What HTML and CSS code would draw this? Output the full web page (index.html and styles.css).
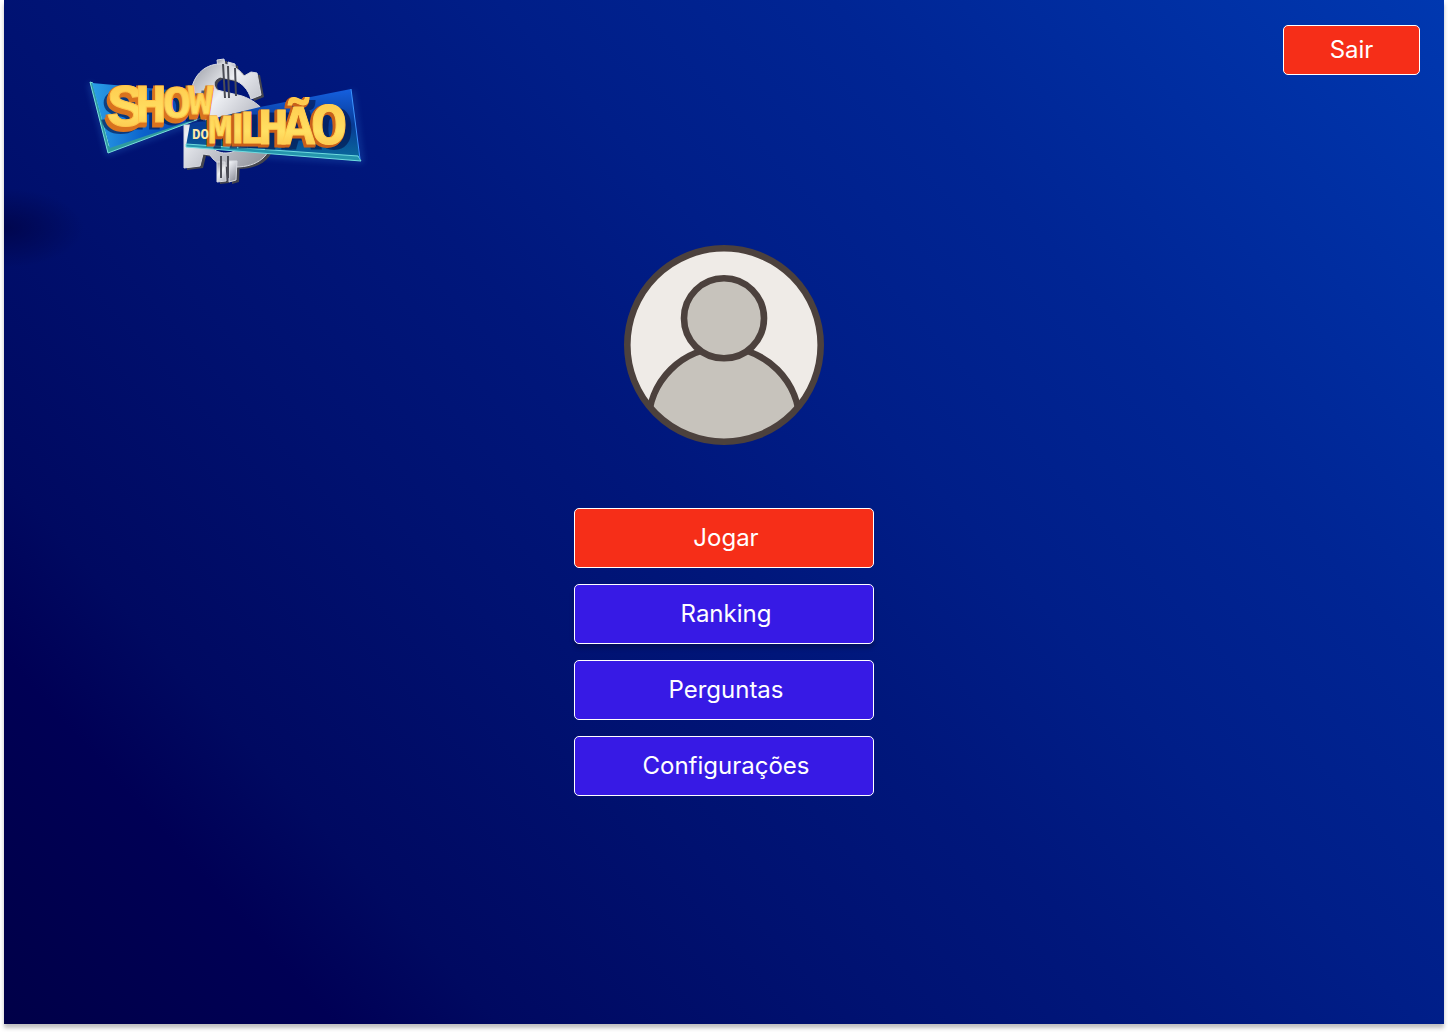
FILE: index.html
```html
<!DOCTYPE html>
<html lang="pt-BR">
<head>
<meta charset="utf-8">
<meta name="viewport" content="width=device-width, initial-scale=1">
<title>Show do Milhão</title>
<link rel="stylesheet" href="styles.css">
</head>
<body>
<div class="screen">
  <header class="header">
    <svg class="logo" viewBox="0 0 290 140" role="img" aria-label="Show do Milhão">
      <defs>
        <linearGradient id="silver" x1="0" y1="0" x2="1" y2="1">
          <stop offset="0" stop-color="#8d8f98"/><stop offset=".35" stop-color="#eef0f4"/>
          <stop offset=".6" stop-color="#c3c5cd"/><stop offset="1" stop-color="#85878f"/>
        </linearGradient>
        <linearGradient id="panelLeft" x1="0" y1="0" x2="1" y2="0">
          <stop offset="0" stop-color="#2b9fe6"/><stop offset=".45" stop-color="#0b62cc"/><stop offset="1" stop-color="#063a9e"/>
        </linearGradient>
        <linearGradient id="panelRight" x1="0" y1="0" x2="0" y2="1">
          <stop offset="0" stop-color="#1560e0"/><stop offset=".5" stop-color="#073a94"/><stop offset="1" stop-color="#0a6d9c"/>
        </linearGradient>
        <linearGradient id="gold" x1="0" y1="0" x2="0" y2="1">
          <stop offset="0" stop-color="#ffc447"/><stop offset=".55" stop-color="#ffe063"/><stop offset="1" stop-color="#fbb13c"/>
        </linearGradient>
        <filter id="glow" x="-20%" y="-20%" width="140%" height="140%"><feGaussianBlur stdDeviation="3"/></filter>
        <g id="dollar">
          <path d="M137 10l7-1 3 17h-8zM148 12l7 2 1 15-7-2z"/>
          <path d="M171 22l6 1 4 22-10 4c-3-10-9-16-17-19l-14-3c-6 3-8 7-3 13l25 6c20 7 30 22 30 40 0 20-15 31-36 31-13 0-21-4-26-12l-7-1-3 12-16 2V75h15c4 18 14 28 27 28 9 0 13-5 12-10-2-6-9-9-20-14-17-9-27-17-27-33 0-19 13-32 29-32 9 0 18 3 24 12z"/>
          <path d="M137 112h8l1 19-9 1zM149 111h8l-1 19-7 2z"/>
        </g>
        <g id="show">
          <text class="logo-word"><tspan x="27" y="76" font-size="62">S</tspan><tspan x="55" y="72" font-size="53">H</tspan><tspan x="83" y="68" font-size="47">O</tspan><tspan x="108" y="64" font-size="42">W</tspan></text>
        </g>
        <g id="milhao">
          <text class="logo-word"><tspan x="128" y="93" font-size="41">M</tspan><tspan class="logo-stem" x="152" y="93" font-size="42">I</tspan><tspan x="159" y="93" font-size="47">L</tspan><tspan x="178" y="94" font-size="51">H</tspan><tspan x="202" y="94" font-size="55">Ã</tspan><tspan x="231" y="94" font-size="60">O</tspan></text>
        </g>
      </defs>
      <path d="M10 33L28 103 125 68M180 105l101 6-9-70" fill="none" stroke="#4aa8ff" stroke-width="3" opacity=".35" filter="url(#glow)"/>
      <use href="#dollar" x="3" y="2" fill="#45464f"/>
      <use href="#dollar" fill="url(#silver)" stroke="#d9dbe1" stroke-width="1"/>
      <path d="M143 14l2 34M148 16l1 32M155 18l1 28M141 106v22M148 106v22" stroke="#4a4c55" stroke-width="2"/>
      <path d="M10 32l3 1 16 63 98-33v3L28 103z" fill="#2e9b9f" stroke="#7ae0dc" stroke-width="1"/>
      <path d="M12 33L112 42 128 48 122 67 30 98z" fill="url(#panelLeft)"/>
      <path d="M110 74L180 57 271 39l9 72-174-15z" fill="url(#panelRight)"/>
      <path d="M106 94l172 12 3 5-175-14z" fill="#2595ac" stroke="#70dce0" stroke-width="1"/>
      <path d="M271 39l9 70" stroke="#3c95ff" stroke-width="1"/>
      <g class="logo-depth" opacity=".65" fill="#03164e" stroke="#03164e"><use href="#show" x="-5" y="6"/><use href="#milhao" x="5" y="4"/></g>
      <g class="logo-depth" fill="#d9731f" stroke="#d9731f">
        <use href="#show" x="-2" y="4"/><use href="#show" x="-1" y="3"/><use href="#show" x="-1" y="1"/>
      </g>
      <use class="logo-face" href="#show" fill="url(#gold)" stroke="#ffc64c"/>
      <g class="logo-depth" fill="#c9601a" stroke="#c9601a">
        <use href="#milhao" x="-2" y="2"/><use href="#milhao" x="-1" y="1"/>
      </g>
      <use class="logo-face" href="#milhao" fill="url(#gold)" stroke="#ffd053"/>
      <text class="logo-small" x="112" y="89">DO</text>
    </svg>
    <button class="button button-red button-exit" type="button">Sair</button>
  </header>
  <main class="menu">
    <svg class="avatar" viewBox="0 0 200 200" role="img" aria-label="Avatar do jogador">
      <defs><clipPath id="face"><circle cx="100" cy="100" r="97"/></clipPath></defs>
      <circle cx="100" cy="100" r="97" fill="#efebe7"/>
      <g stroke="#4c413d" stroke-width="6.6">
        <circle cx="100" cy="178" r="75.5" fill="#c7c3bc" clip-path="url(#face)"/>
        <circle cx="100" cy="73.3" r="40" fill="#c7c3bc"/>
        <circle cx="100" cy="100" r="96.7" fill="none"/>
      </g>
    </svg>
    <nav class="actions" aria-label="Menu principal">
      <button class="button button-red" type="button">Jogar</button>
      <button class="button button-raised" type="button">Ranking</button>
      <button class="button" type="button">Perguntas</button>
      <button class="button" type="button">Configurações</button>
    </nav>
  </main>
</div>
</body>
</html>
```
FILE: styles.css
```css
* {
  box-sizing: border-box;
}

body {
  margin: 0;
  background: #fff;
  font-family: Inter, "Liberation Sans", sans-serif;
}

.screen {
  display: flex;
  flex-direction: column;
  min-height: calc(100vh - 8px);
  margin: 0 4px 8px;
  background:
    radial-gradient(ellipse 80px 40px at 0 228px, rgba(0, 0, 60, 0.6), transparent),
    linear-gradient(48deg, #000048 0%, #000055 14%, #000961 21%, #001170 36%, #00177c 49%, #001e88 60%, #002594 74%, #002da0 85%, #0038b0 100%);
  box-shadow: 0 4px 4px rgba(0, 0, 0, 0.25);
}

.header {
  display: flex;
  align-items: flex-start;
  justify-content: space-between;
  padding: 25px 24px 0 76px;
}

.logo {
  width: 290px;
  height: 140px;
  margin-top: 25px;
}

.logo-word {
  font-family: "Liberation Mono", monospace;
  font-weight: 700;
}

.logo-depth {
  stroke-width: 3px;
}

.logo-face {
  stroke-width: 1px;
}

.logo-stem {
  font-family: "Liberation Sans", sans-serif;
}

.logo-small {
  font-family: "Liberation Mono", monospace;
  font-size: 14px;
  font-weight: 700;
  fill: #ffe9a8;
}

.menu {
  display: flex;
  flex-direction: column;
  align-items: center;
  gap: 63px;
  padding: 55px 24px;
}

.avatar {
  width: 200px;
  height: 200px;
}

.actions {
  display: flex;
  flex-direction: column;
  gap: 16px;
  width: 300px;
  max-width: 100%;
}

.button {
  height: 60px;
  padding: 0 0 0 4px;
  border: 1px solid #fff;
  border-radius: 5px;
  background: #371ae5;
  color: #fff;
  font-family: inherit;
  font-size: 24px;
  font-weight: 400;
  line-height: 32px;
  cursor: pointer;
}

.button-red {
  background: #f62e18;
}

.button-raised {
  box-shadow: 0 4px 4px rgba(0, 0, 0, 0.25);
}

.button-exit {
  width: 137px;
  height: 50px;
  padding: 0;
}
```
